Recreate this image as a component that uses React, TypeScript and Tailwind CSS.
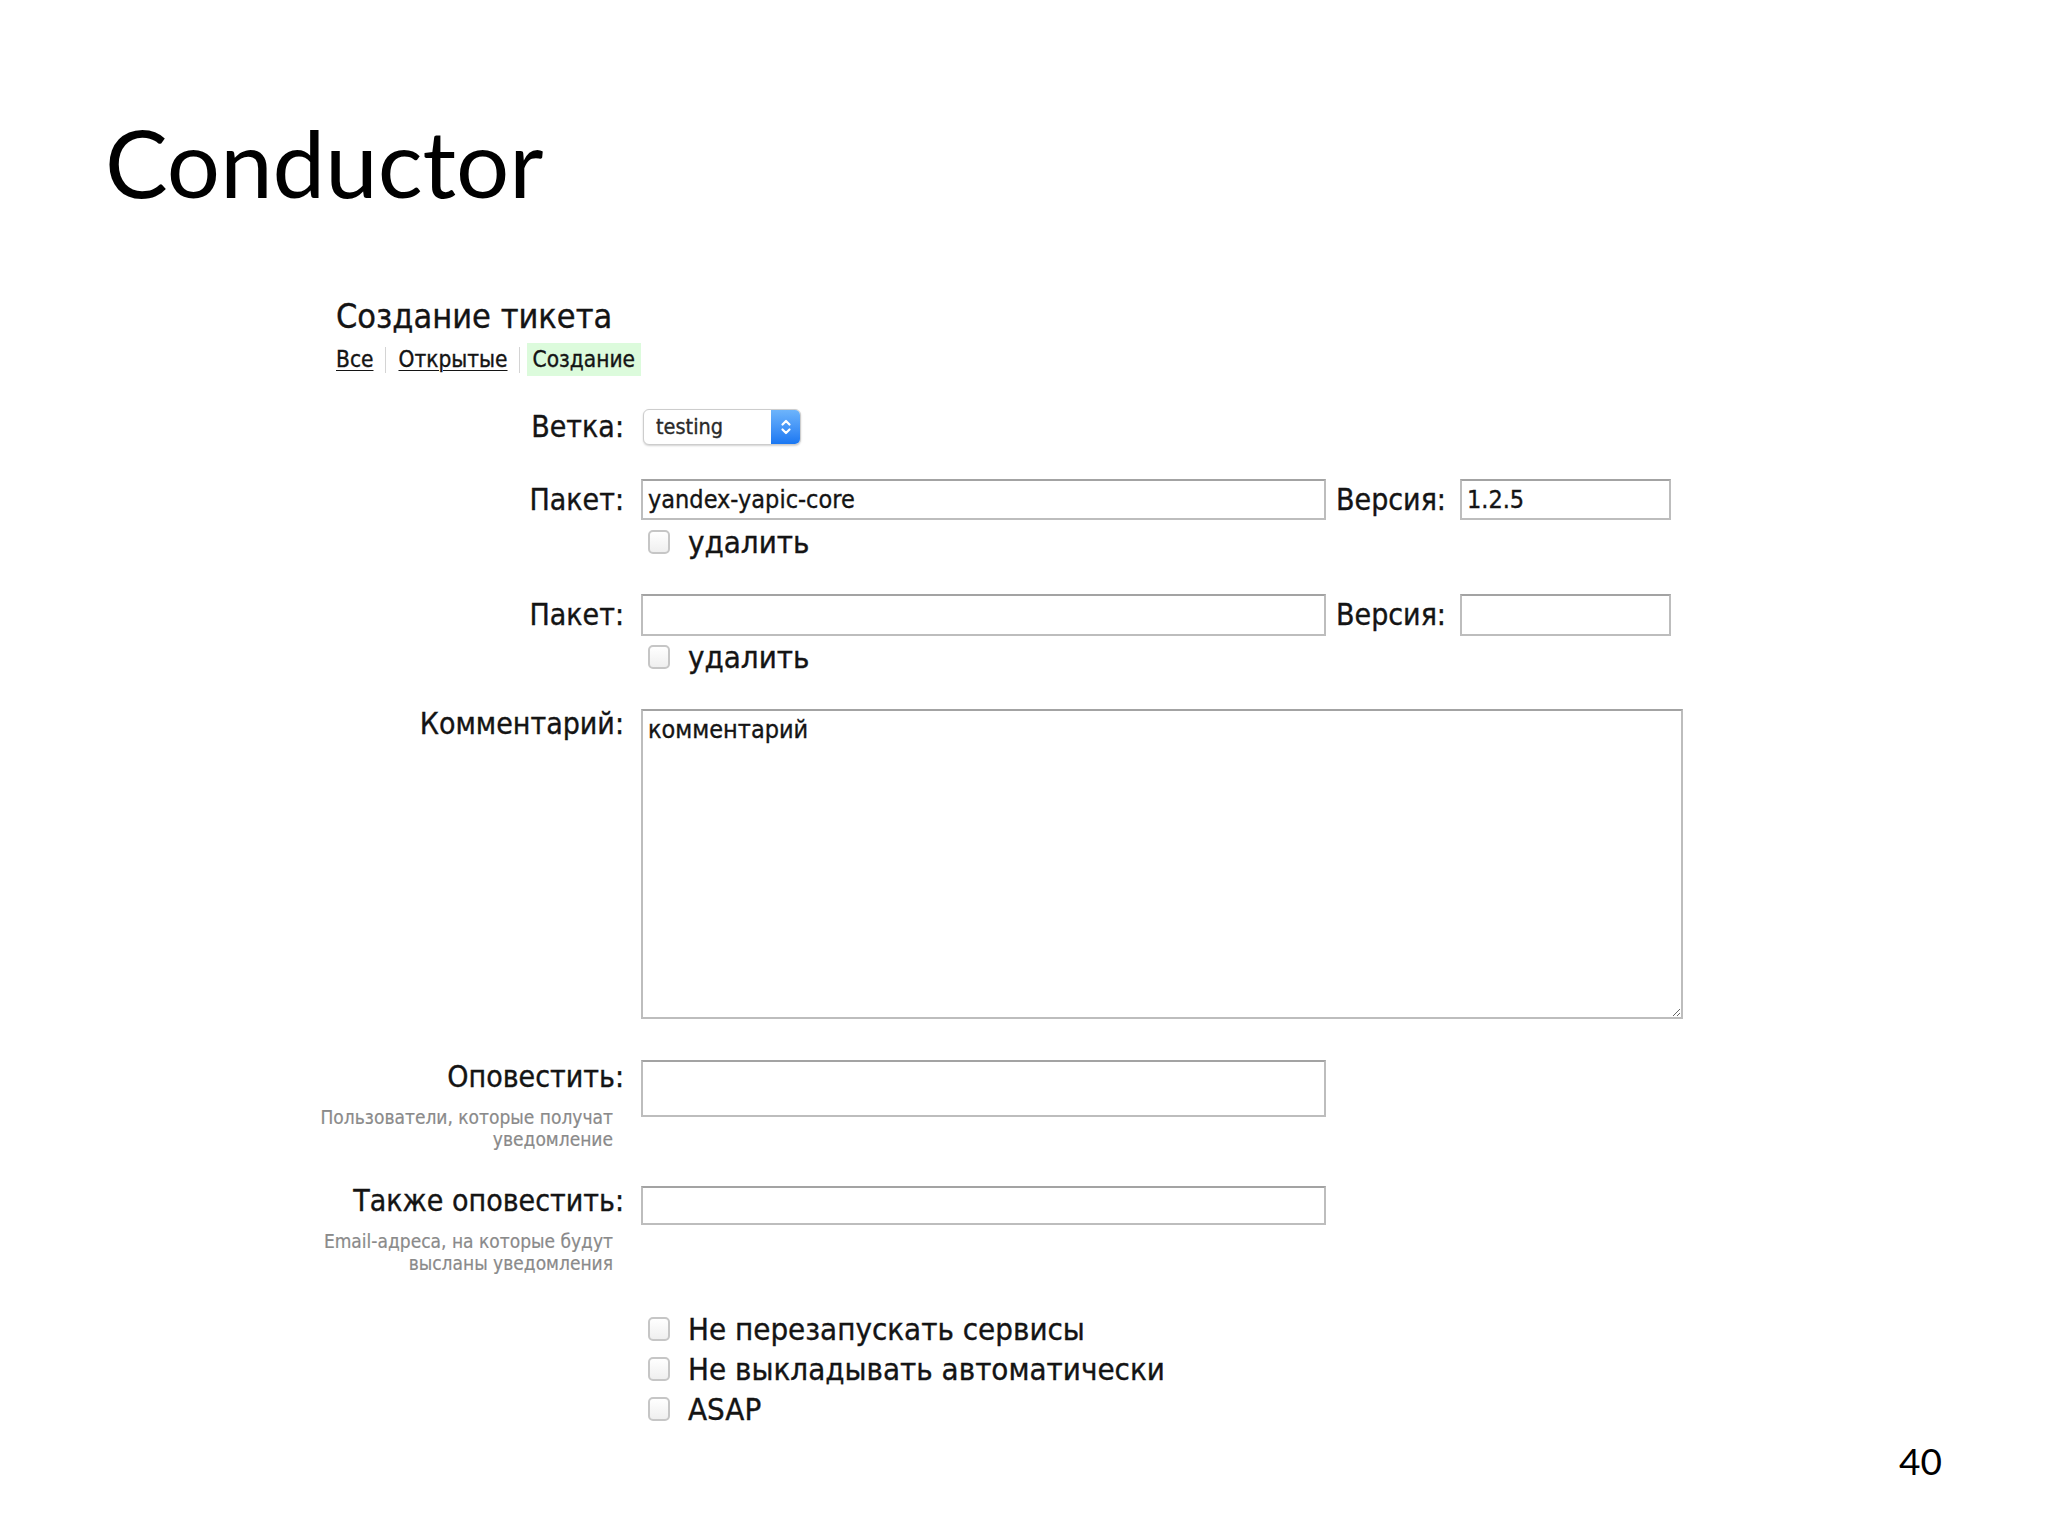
const FORM = "font-['DejaVu_Sans',sans-serif] [font-stretch:condensed] text-[#141414] [-webkit-text-stroke:0.35px_currentColor]";

function Checkbox() {
  return (
    <span className="inline-block h-[24px] w-[22px] shrink-0 rounded-[5px] border-2 border-[#c6c6c6] bg-linear-to-b from-white to-[#efefef]" />
  );
}

function Box({ className, children }: { className: string; children?: React.ReactNode }) {
  return (
    <div
      className={`flex items-center border-2 border-[#bdbdbd] border-t-[#a3a3a3] bg-white px-[5px] text-[25px] leading-none ${className}`}
    >
      {children}
    </div>
  );
}

function CheckRow({ label, className }: { label: string; className?: string }) {
  return (
    <div className={`flex items-center pl-[7px] ${className ?? ""}`}>
      <Checkbox />
      <span className="ml-[18px] text-[31px] leading-none">{label}</span>
    </div>
  );
}

function Label({ className, children }: { className: string; children: React.ReactNode }) {
  return <div className={`text-right text-[30px] ${className}`}>{children}</div>;
}

function Hint({ children }: { children: React.ReactNode }) {
  return (
    <div className="mt-[14px] pr-[11px] text-right text-[19px] leading-[22px] text-[#8a8a8a] [-webkit-text-stroke:0.2px_currentColor]">
      {children}
    </div>
  );
}

export default function App() {
  return (
    <div className="flex h-[1536px] w-[2048px] flex-col overflow-hidden bg-white">
      <h1 className="pl-[105px] pt-[115px] font-['Lato',sans-serif] text-[94px] font-normal leading-none text-black">
        Conductor
      </h1>

      <div className={`ml-[300px] mt-[90px] ${FORM}`}>
        <div className="pl-[36px]">
          <div className="text-[34px] leading-[35px]">Создание тикета</div>
          <div className="mt-[9px] flex h-[33px] items-center text-[22.5px] leading-[33px]">
            <a className="underline decoration-1 underline-offset-[3px]">Все</a>
            <span className="mx-[12px] h-[26px] w-px bg-[#d4d4d4]" />
            <a className="underline decoration-1 underline-offset-[3px]">Открытые</a>
            <span className="ml-[11px] mr-[7px] h-[26px] w-px bg-[#d4d4d4]" />
            <span className="bg-[#dcfbdc] px-[6px]">Создание</span>
          </div>
        </div>

        {/* Ветка */}
        <div className="mt-[33px] flex items-start">
          <Label className="w-[324px] shrink-0 leading-[36px]">Ветка:</Label>
          <div className="ml-[19px] flex h-[36px] w-[158px] overflow-hidden rounded-[6px] border border-[#cdcdcd] bg-white shadow-[0_1px_2px_rgba(0,0,0,0.18)]">
            <div className="flex flex-1 items-center pl-[12px] font-['DejaVu_Sans',sans-serif] text-[21.5px] text-[#2a2a2a]">
              testing
            </div>
            <div className="flex w-[29px] items-center justify-center bg-linear-to-b from-[#6db4fb] to-[#1977f2]">
              <svg width="12" height="20" viewBox="0 0 12 20" fill="none" stroke="white" strokeWidth="2.2" strokeLinecap="round" strokeLinejoin="round">
                <path d="M2.5 7.5 6 4l3.5 3.5" />
                <path d="M2.5 12.5 6 16l3.5-3.5" />
              </svg>
            </div>
          </div>
        </div>

        {/* Пакет 1 */}
        <div className="mt-[34px] flex items-start">
          <Label className="w-[324px] shrink-0 leading-[41px]">Пакет:</Label>
          <div className="ml-[17px]">
            <div className="flex items-center">
              <Box className="h-[41px] w-[685px]">yandex-yapic-core</Box>
              <span className="ml-[10px] text-[30px] leading-none">Версия:</span>
              <Box className="ml-[14px] h-[41px] w-[211px]">1.2.5</Box>
            </div>
            <CheckRow label="удалить" className="mt-[10px] h-[24px]" />
          </div>
        </div>

        {/* Пакет 2 */}
        <div className="mt-[40px] flex items-start">
          <Label className="w-[324px] shrink-0 leading-[42px]">Пакет:</Label>
          <div className="ml-[17px]">
            <div className="flex items-center">
              <Box className="h-[42px] w-[685px]" />
              <span className="ml-[10px] text-[30px] leading-none">Версия:</span>
              <Box className="ml-[14px] h-[42px] w-[211px]" />
            </div>
            <CheckRow label="удалить" className="mt-[9px] h-[24px]" />
          </div>
        </div>

        {/* Комментарий */}
        <div className="mt-[40px] flex items-start">
          <Label className="w-[324px] shrink-0 leading-[30px]">Комментарий:</Label>
          <textarea
            readOnly
            defaultValue="комментарий"
            className="ml-[17px] h-[310px] w-[1042px] resize border-2 border-[#bdbdbd] border-t-[#a3a3a3] bg-white px-[5px] py-[4px] text-[25px] leading-[30px] outline-none"
          />
        </div>

        {/* Оповестить */}
        <div className="mt-[41px] flex items-start">
          <div className="w-[324px] shrink-0">
            <Label className="mt-[2px] leading-[30px]">Оповестить:</Label>
            <Hint>
              Пользователи, которые получат
              <br />
              уведомление
            </Hint>
          </div>
          <Box className="ml-[17px] h-[57px] w-[685px]" />
        </div>

        {/* Также оповестить */}
        <div className="mt-[36px] flex items-start">
          <div className="w-[324px] shrink-0">
            <Label className="leading-[30px]">Также оповестить:</Label>
            <Hint>
              Email-адреса, на которые будут
              <br />
              высланы уведомления
            </Hint>
          </div>
          <Box className="ml-[17px] h-[39px] w-[685px]" />
        </div>

        <div className="ml-[341px] mt-[35px]">
          <CheckRow label="Не перезапускать сервисы" className="h-[40px]" />
          <CheckRow label="Не выкладывать автоматически" className="h-[40px]" />
          <CheckRow label="ASAP" className="h-[40px]" />
        </div>
      </div>

      <div className="mt-auto pb-[57px] pr-[106px] text-right font-['Lato',sans-serif] text-[37px] leading-none text-black">
        40
      </div>
    </div>
  );
}
